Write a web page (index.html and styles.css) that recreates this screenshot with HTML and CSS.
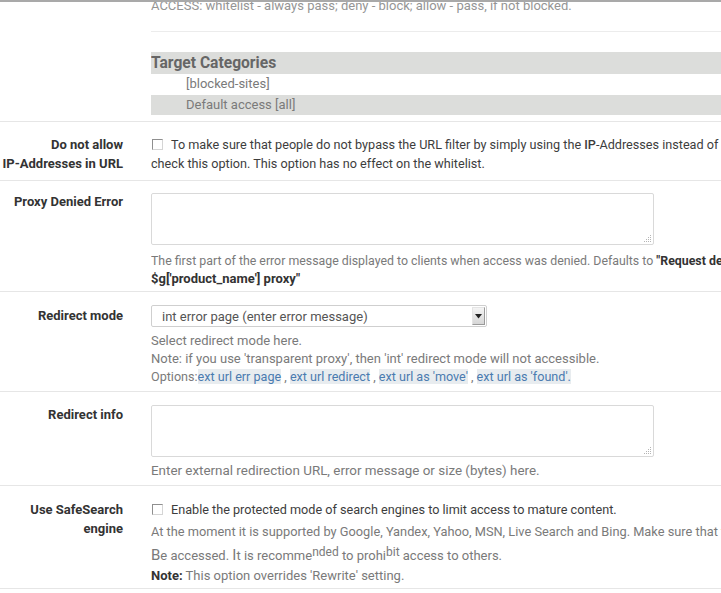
FILE: index.html
```html
<!DOCTYPE html>
<html>
<head>
<meta charset="utf-8">
<link rel="stylesheet" href="styles.css">
</head>
<body>
<div class="page">
  <section class="row row-top">
    <div class="label"></div>
    <div class="content">
      <div class="access">ACCESS: whitelist - always pass; deny - block; allow - pass, if not blocked.</div>
      <div class="faint-line"></div>
      <div class="cat-head">Target Categories</div>
      <div class="cat-item">[blocked-sites]</div>
      <div class="cat-item cat-shaded">Default access [all]</div>
    </div>
  </section>

  <section class="row row-ip">
    <div class="label">Do not allow<br>IP-Addresses in URL</div>
    <div class="content text-dark">
      <div class="line"><span class="checkbox"></span>To make sure that people do not bypass the URL filter by simply using the <b class="semi">IP</b>-Addresses instead of host names,</div>
      <div class="line">check this option. This option has no effect on the whitelist.</div>
    </div>
  </section>

  <section class="row row-denied">
    <div class="label">Proxy Denied Error</div>
    <div class="content">
      <div class="area-wrap">
        <textarea class="area"></textarea>
        <svg class="grip" width="9" height="9" viewBox="0 0 9 9"><g fill="#b5b5b5"><rect x="7" y="1" width="1" height="1"/><rect x="5" y="3" width="1" height="1"/><rect x="7" y="3" width="1" height="1"/><rect x="3" y="5" width="1" height="1"/><rect x="5" y="5" width="1" height="1"/><rect x="7" y="5" width="1" height="1"/><rect x="1" y="7" width="1" height="1"/><rect x="3" y="7" width="1" height="1"/><rect x="5" y="7" width="1" height="1"/><rect x="7" y="7" width="1" height="1"/></g></svg>
      </div>
      <div class="help">
        <div class="line line-first">The first part of the error message displayed to clients when access was denied. Defaults to <b class="strong">"Request denied by</b></div>
        <div class="line"><b class="strong">$g['product_name'] proxy"</b></div>
      </div>
    </div>
  </section>

  <section class="row row-mode">
    <div class="label">Redirect mode</div>
    <div class="content">
      <div class="select">
        <span class="select-text">int error page (enter error message)</span>
        <span class="select-btn"><svg width="7" height="5" viewBox="0 0 7 5"><path d="M0 0H7L3.5 4.5Z" fill="#222"/></svg></span>
      </div>
      <div class="help help-mode">
        <div class="line">Select redirect mode here.</div>
        <div class="line">Note: if you use 'transparent proxy', then 'int' redirect mode will not accessible.</div>
        <div class="line">Options:<a class="opt">ext url err page</a> , <a class="opt">ext url redirect</a> , <a class="opt">ext url as 'move'</a> , <a class="opt">ext url as 'found'.</a></div>
      </div>
    </div>
  </section>

  <section class="row row-info">
    <div class="label">Redirect info</div>
    <div class="content">
      <div class="area-wrap">
        <textarea class="area"></textarea>
        <svg class="grip" width="9" height="9" viewBox="0 0 9 9"><g fill="#b5b5b5"><rect x="7" y="1" width="1" height="1"/><rect x="5" y="3" width="1" height="1"/><rect x="7" y="3" width="1" height="1"/><rect x="3" y="5" width="1" height="1"/><rect x="5" y="5" width="1" height="1"/><rect x="7" y="5" width="1" height="1"/><rect x="1" y="7" width="1" height="1"/><rect x="3" y="7" width="1" height="1"/><rect x="5" y="7" width="1" height="1"/><rect x="7" y="7" width="1" height="1"/></g></svg>
      </div>
      <div class="help help-info">
        <div class="line">Enter external redirection URL, error message or size (bytes) here.</div>
      </div>
    </div>
  </section>

  <section class="row row-safe">
    <div class="label">Use SafeSearch<br>engine</div>
    <div class="content">
      <div class="line line-check text-dark"><span class="checkbox"></span>Enable the protected mode of search engines to limit access to mature content.</div>
      <div class="help help-safe">
        <div class="line line-narrow">At the moment it is supported by Google, Yandex, Yahoo, MSN, Live Search and Bing. Make sure that the search engines can</div>
        <div class="line"><span class="big">B</span>e accessed. <span class="big">I</span>t is recomme<span class="raise">nded</span> to prohi<span class="raise">bit</span> access to others.</div>
        <div class="line"><b class="strong">Note:</b> This option overrides 'Rewrite' setting.</div>
      </div>
    </div>
  </section>
</div>
</body>
</html>
```

FILE: styles.css
```css
html, body {
  margin: 0;
  padding: 0;
  overflow: hidden;
  background: #fff;
}
body {
  font-family: Roboto, "Liberation Sans", sans-serif;
  font-size: 13px;
  color: #444;
  border-top: 2px solid #a9a9a9;
}
.page {
  width: 721px;
}
.row {
  display: grid;
  grid-template-columns: 123px 1fr;
  column-gap: 28px;
  border-bottom: 1px solid #e6e6e6;
}
.label {
  text-align: right;
  font-weight: 700;
  color: #333;
  line-height: 19px;
  white-space: nowrap;
}
.content {
  min-width: 0;
  overflow: hidden;
}
.line {
  white-space: nowrap;
}
.text-dark {
  color: #3d3d3d;
  font-size: 12.65px;
}
.help {
  color: #7a7a7a;
}
.semi {
  font-weight: 500;
}
.strong {
  font-weight: 700;
  color: #333;
}

/* top section */
.row-top {
  height: 119px;
}
.access {
  color: #959595;
  line-height: 14px;
  margin-top: -3px;
}
.faint-line {
  height: 1px;
  background: #ececec;
  margin-top: 18px;
}
.cat-head {
  margin-top: 20px;
  height: 22px;
  line-height: 22px;
  background: #dcdddb;
  font-size: 15.6px;
  font-weight: 700;
  color: #666;
}
.cat-item {
  padding-left: 35px;
  height: 20px;
  line-height: 20px;
  color: #7a7a7a;
}
.cat-shaded {
  background: #dcdddb;
  margin-top: 1px;
}

/* IP row */
.row-ip {
  height: 58px;
}
.row-ip .label,
.row-ip .content {
  padding-top: 13px;
}
.row-ip .line {
  line-height: 19px;
}
.checkbox {
  display: inline-block;
  width: 9px;
  height: 9px;
  border: 1px solid #8f8f8f;
  border-right-color: #d5d5d5;
  border-bottom-color: #d5d5d5;
  background: #fff;
  margin-right: 8px;
  margin-left: 1px;
  vertical-align: -1px;
  box-sizing: content-box;
}

/* denied row */
.row-denied {
  height: 110px;
}
.row-denied .label {
  padding-top: 11px;
}
.row-denied .content {
  padding-top: 12px;
}
.area-wrap {
  position: relative;
  width: 503px;
}
.area {
  display: block;
  width: 503px;
  height: 52px;
  box-sizing: border-box;
  border: 1px solid #d9d9d9;
  border-radius: 2px;
  margin: 0;
  padding: 4px;
  resize: none;
  font-family: inherit;
}
.grip {
  position: absolute;
  right: 2px;
  bottom: 2px;
}
.row-denied .help {
  margin-top: 7px;
  line-height: 18px;
}
.line-first {
  font-size: 12.35px;
}

/* redirect mode */
.row-mode {
  height: 99px;
}
.row-mode .label {
  padding-top: 14px;
}
.row-mode .content {
  padding-top: 13px;
}
.select {
  width: 336px;
  height: 22px;
  box-sizing: border-box;
  border: 1px solid #cfcfcf;
  border-radius: 2px;
  display: flex;
  align-items: center;
  justify-content: space-between;
  padding-left: 10px;
  padding-right: 1px;
  color: #555;
}
.select-btn {
  width: 13px;
  height: 18px;
  box-sizing: border-box;
  border: 1px solid #9a9a9a;
  border-left-color: #e4e4e4;
  border-top-color: #e4e4e4;
  background: linear-gradient(#f4f4f4, #d6d6d6);
  display: flex;
  align-items: center;
  justify-content: center;
}
.help-mode {
  margin-top: 5px;
  line-height: 18px;
}
.help-mode .line:last-child {
  font-size: 12.6px;
}
.opt {
  color: #4a7bb0;
  background: #e8ecef;
}

/* redirect info */
.row-info {
  height: 93px;
}
.row-info .label {
  padding-top: 13px;
}
.row-info .content {
  padding-top: 13px;
}
.help-info {
  margin-top: 5px;
  line-height: 18px;
  font-size: 13.4px;
}

/* safesearch */
.row-safe {
  height: 102px;
}
.row-safe .label {
  padding-top: 14px;
  line-height: 19px;
}
.row-safe .content {
  padding-top: 14px;
}
.line-check {
  line-height: 19px;
}
.help-safe {
  margin-top: 3px;
  line-height: 20px;
}
.line-narrow {
  font-size: 12.8px;
}
.big {
  font-size: 15px;
}
.raise {
  font-size: 12px;
  vertical-align: 4px;
}
```
